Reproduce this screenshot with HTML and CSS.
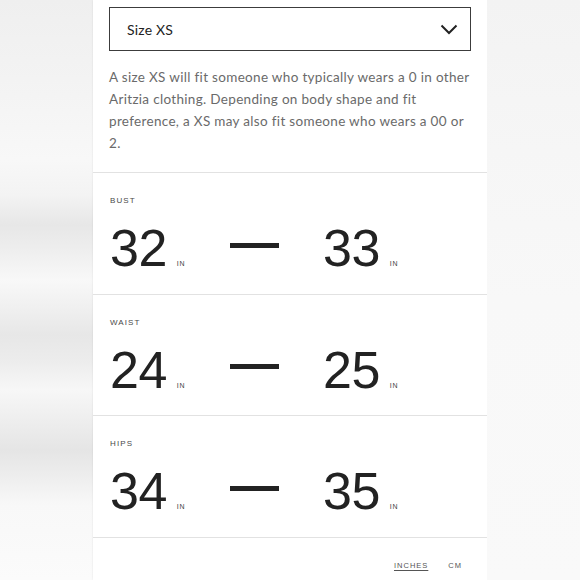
FILE: index.html
```html
<!DOCTYPE html>
<html lang="en">
<head>
<meta charset="utf-8">
<title>Size guide</title>
<link rel="stylesheet" href="styles.css">
</head>
<body>
<div class="page">
  <div class="side side-left"></div>
  <main class="card">
    <div class="top">
      <div class="select">
        <span class="select-label">Size XS</span>
        <svg class="chevron" width="18" height="11" viewBox="0 0 18 11"><path d="M1.5 1.5 L9 9 L16.5 1.5" fill="none" stroke="#222" stroke-width="2"/></svg>
      </div>
      <p class="desc">A size XS will fit someone who typically wears a 0 in other Aritzia clothing. Depending on body shape and fit preference, a XS may also fit someone who wears a 00 or 2.</p>
    </div>
    <section class="row">
      <div class="label">BUST</div>
      <div class="range">
        <div class="val val-left"><span class="num">32</span><span class="unit">IN</span></div>
        <div class="dash"></div>
        <div class="val val-right"><span class="num">33</span><span class="unit">IN</span></div>
      </div>
    </section>
    <section class="row">
      <div class="label">WAIST</div>
      <div class="range">
        <div class="val val-left"><span class="num">24</span><span class="unit">IN</span></div>
        <div class="dash"></div>
        <div class="val val-right"><span class="num">25</span><span class="unit">IN</span></div>
      </div>
    </section>
    <section class="row">
      <div class="label">HIPS</div>
      <div class="range">
        <div class="val val-left"><span class="num">34</span><span class="unit">IN</span></div>
        <div class="dash"></div>
        <div class="val val-right"><span class="num">35</span><span class="unit">IN</span></div>
      </div>
    </section>
    <div class="units">
      <span class="unit-link active">INCHES</span>
      <span class="unit-link">CM</span>
    </div>
  </main>
  <div class="side side-right"></div>
</div>
</body>
</html>
```
FILE: styles.css
```css
html, body {
  margin: 0;
  padding: 0;
}
body {
  width: 580px;
  height: 580px;
  overflow: hidden;
  font-family: "Lato", "Liberation Sans", sans-serif;
}
.page {
  display: flex;
  height: 580px;
}
.side {
  width: 93px;
  flex: none;
}
.side-left {
  background: linear-gradient(to bottom,
    #efefef 0px, #f3f3f3 80px, #f8f8f8 160px, #f3f3f3 195px,
    #e7e7e7 225px, #eeeeee 250px, #f8f8f8 280px, #efefef 310px,
    #e7e7e7 335px, #ececec 360px, #f7f7f7 390px, #eeeeee 420px,
    #e5e5e5 450px, #ededed 475px, #f8f8f8 505px, #fbfbfb 580px);
}
.side-right {
  background: linear-gradient(to bottom, #f3f3f3 0px, #f6f6f6 150px, #f8f8f8 300px, #f9f9f9 580px);
}
.card {
  width: 394px;
  flex: none;
  background: #fff;
  box-shadow: 0 0 2px rgba(0,0,0,0.10);
}
.top {
  padding: 7px 16px 18px 16px;
  border-bottom: 1px solid #e2e2e2;
}
.select {
  box-sizing: border-box;
  width: 362px;
  height: 44px;
  border: 1.5px solid #3c3c3c;
  display: flex;
  align-items: center;
  justify-content: space-between;
  padding: 0 12px 0 17px;
}
.select-label {
  font-size: 14px;
  color: #222;
  letter-spacing: 0.2px;
}
.chevron {
  display: block;
}
.desc {
  margin: 15px 0 0 0;
  width: 362px;
  font-size: 13.5px;
  line-height: 22px;
  color: #6a6a6a;
  letter-spacing: 0.32px;
}
.row {
  height: 120.7px;
  box-sizing: content-box;
  border-bottom: 1px solid #e2e2e2;
  padding: 0 0 0 17px;
}
.label {
  padding-top: 23px;
  font-family: "Liberation Sans", sans-serif;
  font-size: 8px;
  line-height: 10px;
  letter-spacing: 1.1px;
  color: #4a4a4a;
}
.range {
  margin-top: 16px;
  display: flex;
  align-items: center;
  height: 52px;
}
.val {
  display: flex;
  align-items: baseline;
  font-family: "Liberation Sans", sans-serif;
}
.val-left {
  width: 120px;
}
.val-right {
  margin-left: 44px;
}
.num {
  font-size: 52px;
  line-height: 52px;
  color: #222;
  letter-spacing: -0.5px;
}
.unit {
  font-size: 7px;
  letter-spacing: 0.8px;
  color: #444;
  margin-left: 10px;
}
.dash {
  width: 49px;
  height: 5px;
  background: #222;
  margin-top: -6px;
}
.units {
  display: flex;
  justify-content: flex-end;
  gap: 20px;
  padding: 23px 25px 0 0;
  font-family: "Liberation Sans", sans-serif;
  font-size: 7.5px;
  letter-spacing: 1px;
  color: #555;
}
.unit-link.active {
  text-decoration: underline;
  text-underline-offset: 2px;
}
```
